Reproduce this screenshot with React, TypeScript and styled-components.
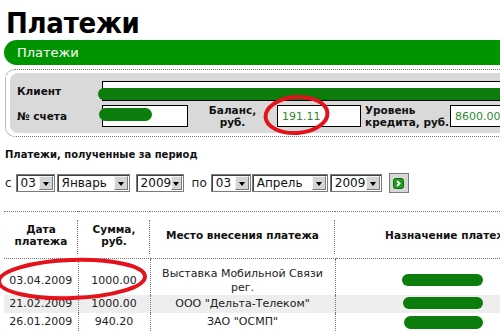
import React from "react";
import styled, { createGlobalStyle } from "styled-components";

const Global = createGlobalStyle`
  html, body { margin: 0; padding: 0; background: #fff; width: 500px; height: 331px; overflow: hidden; }
  body { font-family: "DejaVu Sans", Verdana, sans-serif; color: #111; }
`;

const Page = styled.div`
  position: relative;
  width: 580px;
  height: 331px;
  overflow: hidden;
`;

const Title = styled.h1`
  margin: 0;
  padding: 8px 0 0 6px;
  font-family: "DejaVu Sans Condensed", "DejaVu Sans", sans-serif;
  font-weight: bold;
  font-size: 29px;
  line-height: 30px;
  color: #000;
  letter-spacing: -0.3px;
`;

const Bar = styled.div`
  margin: 2px 0 0 4px;
  height: 25px;
  line-height: 25px;
  padding-left: 13px;
  background: #009500;
  border-radius: 13px 0 0 13px;
  color: #fff;
  font-size: 13px;
`;

const InfoBox = styled.div`
  margin: 4px 0 0 5px;
  border: 1px dotted #777;
  border-right: none;
  border-radius: 10px 0 0 10px;
  padding: 3px 0 3px 4px;
`;

const InfoInner = styled.div`
  background: #d9d9d9;
  border-radius: 8px 0 0 8px;
  padding: 8px 0 6px 7px;
  display: flex;
  flex-direction: column;
  gap: 4px;
`;

const InfoRow = styled.div<{ $h: number }>`
  display: flex;
  align-items: center;
  height: ${(p) => p.$h}px;
`;

const Label = styled.div`
  width: 85px;
  flex: none;
  font-weight: bold;
  font-size: 10.5px;
`;

const SubLabel = styled.div<{ $w: number; $center?: boolean }>`
  width: ${(p) => p.$w}px;
  flex: none;
  box-sizing: border-box;
  padding-left: ${(p) => (p.$center ? 0 : 4)}px;
  text-align: ${(p) => (p.$center ? "center" : "left")};
  font-weight: bold;
  font-size: 10.5px;
  line-height: 12px;
`;

const Field = styled.div<{ $w?: number }>`
  ${(p) => (p.$w ? `width: ${p.$w}px; flex: none;` : "flex: 1;")}
  box-sizing: border-box;
  height: 100%;
  background: #fff;
  border: 1px solid #000;
  padding-left: 4px;
  display: flex;
  align-items: center;
  font-size: 11px;
  color: #2f8a2f;
`;

const SectionTitle = styled.div`
  margin: 11px 0 0 5px;
  font-weight: bold;
  font-size: 10px;
  line-height: 14px;
`;

const DateRow = styled.div`
  margin: 11px 0 0 5px;
  height: 20px;
  display: flex;
  align-items: center;
  font-size: 11px;
`;

const Word = styled.span<{ $ml?: number; $mr: number }>`
  margin-left: ${(p) => p.$ml ?? 0}px;
  margin-right: ${(p) => p.$mr}px;
  font-size: 12px;
  color: #222;
`;

const Select = styled.div<{ $w: number; $ml?: number }>`
  width: ${(p) => p.$w}px;
  margin-left: ${(p) => p.$ml ?? 0}px;
  height: 18px;
  box-sizing: border-box;
  flex: none;
  display: flex;
  align-items: center;
  justify-content: space-between;
  background: #fff;
  border: 1px solid #7a7a7a;
  box-shadow: inset 1px 1px 0 #404040;
  padding: 1px 1px 1px 4px;
  font-size: 12px;
  color: #111;
`;

const Arrow = styled.span`
  width: 14px;
  height: 14px;
  box-sizing: border-box;
  background: #d4d4d4;
  border: 1px solid;
  border-color: #f4f4f4 #7a7a7a #7a7a7a #f4f4f4;
  display: flex;
  align-items: center;
  justify-content: center;
  &::after {
    content: "";
    border-left: 3px solid transparent;
    border-right: 3px solid transparent;
    border-top: 4px solid #000;
    margin-top: 1px;
  }
`;

const GoButton = styled.div`
  margin-left: 7px;
  width: 20px;
  height: 20px;
  box-sizing: border-box;
  background: #d6d6d6;
  border: 1px solid #7a7a7a;
  display: flex;
  align-items: center;
  justify-content: center;
`;

const Table = styled.table`
  margin: 18px 0 0 4px;
  width: 560px;
  border-collapse: collapse;
  table-layout: fixed;
  border-top: 1px dotted #777;
`;

const Th = styled.th<{ $w: number }>`
  box-sizing: border-box;
  width: ${(p) => p.$w}px;
  height: 47px;
  padding: 0 2px;
  position: relative;
  font-size: 10.5px;
  line-height: 12px;
  font-weight: bold;
  text-align: center;
  vertical-align: middle;
  border-bottom: 1px dotted #777;
  &:not(:last-child)::after {
    content: "";
    position: absolute;
    right: 0;
    top: 8px;
    bottom: 4px;
    border-right: 1px dotted #777;
  }
`;

const Tr = styled.tr<{ $shade?: boolean }>`
  background: ${(p) => (p.$shade ? "#eeeeee" : "transparent")};
`;

const Td = styled.td<{ $top?: number; $bottom?: number }>`
  box-sizing: border-box;
  padding: ${(p) => p.$top ?? 2}px 2px ${(p) => p.$bottom ?? 2}px;
  font-size: 11px;
  line-height: 14px;
  color: #222;
  text-align: center;
  vertical-align: middle;
  &:not(:last-child) {
    border-right: 1px dotted #777;
  }
`;

const Overlay = styled.svg`
  position: absolute;
  left: 0;
  top: 0;
  pointer-events: none;
`;

const rows = [
  { date: "03.04.2009", sum: "1000.00", place: "Выставка Мобильной Связи рег.", top: 8, bottom: 0 },
  { date: "21.02.2009", sum: "1000.00", place: "ООО \"Дельта-Телеком\"", shade: true },
  { date: "26.01.2009", sum: "940.20", place: "ЗАО \"ОСМП\"" },
];

export default function App() {
  return (
    <Page>
      <Global />
      <Title>Платежи</Title>
      <Bar>Платежи</Bar>
      <InfoBox>
        <InfoInner>
          <InfoRow $h={20}>
            <Label>Клиент</Label>
            <Field />
          </InfoRow>
          <InfoRow $h={22}>
            <Label>№ счета</Label>
            <Field $w={86} />
            <SubLabel $w={89} $center>
              Баланс,
              <br />
              руб.
            </SubLabel>
            <Field $w={84}>191.11</Field>
            <SubLabel $w={89}>
              Уровень
              <br />
              кредита, руб.
            </SubLabel>
            <Field $w={110}>8600.00</Field>
          </InfoRow>
        </InfoInner>
      </InfoBox>
      <SectionTitle>Платежи, полученные за период</SectionTitle>
      <DateRow>
        <Word $mr={4}>с</Word>
        <Select $w={39}>03<Arrow /></Select>
        <Select $w={73} $ml={2}>Январь<Arrow /></Select>
        <Select $w={48} $ml={6}>2009<Arrow /></Select>
        <Word $ml={8} $mr={4}>по</Word>
        <Select $w={40}>03<Arrow /></Select>
        <Select $w={76} $ml={1}>Апрель<Arrow /></Select>
        <Select $w={52} $ml={2}>2009<Arrow /></Select>
        <GoButton>
          <svg width="11" height="11" viewBox="0 0 11 11">
            <rect x="0.5" y="0.5" width="10" height="10" rx="2" fill="#1f9a1f" stroke="#0b6b0b" />
            <path d="M4 3 L6.6 5.5 L4 8" fill="none" stroke="#fff" strokeWidth="1.8" />
          </svg>
        </GoButton>
      </DateRow>
      <Table>
        <thead>
          <tr>
            <Th $w={74}>Дата<br />платежа</Th>
            <Th $w={72}>Сумма,<br />руб.</Th>
            <Th $w={185}>Место внесения платежа</Th>
            <Th $w={229}>Назначение платежа</Th>
          </tr>
        </thead>
        <tbody>
          {rows.map((r) => (
            <Tr key={r.date} $shade={r.shade}>
              <Td $top={r.top} $bottom={r.bottom}>{r.date}</Td>
              <Td $top={r.top} $bottom={r.bottom}>{r.sum}</Td>
              <Td $top={r.top} $bottom={r.bottom}>{r.place}</Td>
              <Td $top={r.top} $bottom={r.bottom}></Td>
            </Tr>
          ))}
        </tbody>
      </Table>
      <Overlay width="580" height="331" viewBox="0 0 580 331">
        <g fill="#0c7c0c">
          <rect x="98" y="88" width="460" height="12" rx="6" />
          <rect x="99" y="108" width="53" height="13" rx="6.5" />
          <rect x="402" y="274" width="81" height="12" rx="6" />
          <rect x="403" y="297" width="80" height="12" rx="6" />
          <rect x="404" y="316" width="79" height="13" rx="6.5" />
        </g>
        <g fill="none" stroke="#e3121b" strokeWidth="4">
          <ellipse cx="296.5" cy="115" rx="31" ry="18" transform="rotate(-4 296.5 115)" />
          <ellipse cx="72" cy="279" rx="73" ry="19" transform="rotate(-2 72 279)" />
        </g>
      </Overlay>
    </Page>
  );
}
